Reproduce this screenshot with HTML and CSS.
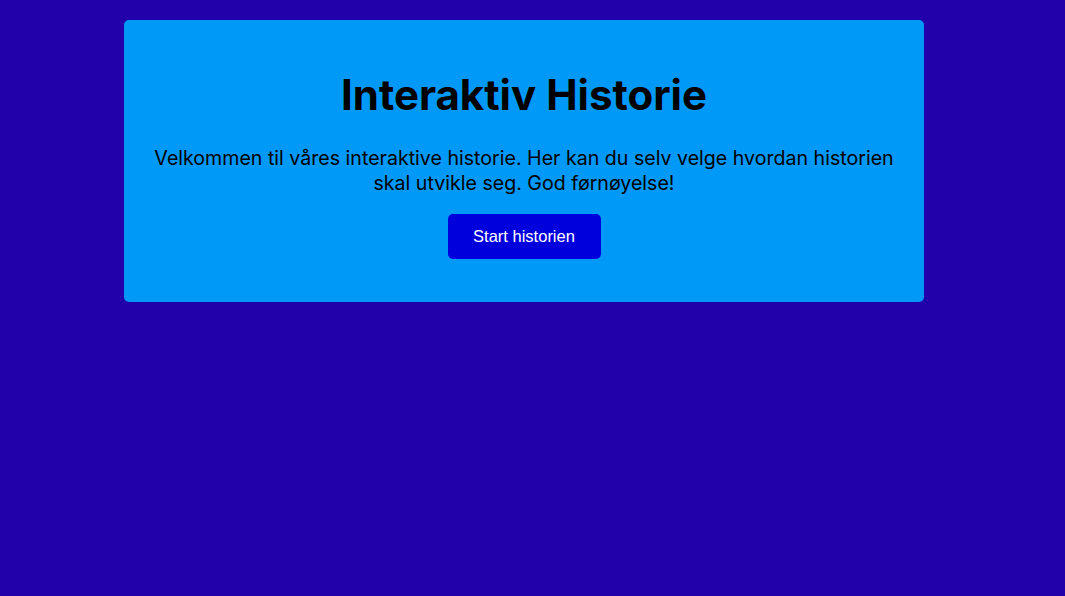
FILE: index.html
```html
<!DOCTYPE html>
<html lang="no">
<head>
<meta charset="utf-8">
<title>Interaktiv Historie</title>
<link rel="stylesheet" href="styles.css">
</head>
<body>
<main class="card">
  <h1 class="title">Interaktiv Historie</h1>
  <p class="intro">Velkommen til våres interaktive historie. Her kan du selv velge hvordan historien skal utvikle seg. God førnøyelse!</p>
  <button class="start" type="button">Start historien</button>
</main>
</body>
</html>
```
FILE: styles.css
```css
html, body {
  margin: 0;
  padding: 0;
}
body {
  background: #2200aa;
  font-family: "Inter", "Roboto", sans-serif;
  color: #000;
  padding: 20px 17px 0 0;
}
.card {
  width: 800px;
  box-sizing: border-box;
  margin: 0 auto;
  background: #0099f7;
  border-radius: 5px;
  padding: 51px 20px 43px;
  display: flex;
  flex-direction: column;
  align-items: center;
  text-align: center;
}
.title {
  margin: 0;
  font-size: 42px;
  line-height: 48px;
  font-weight: 700;
}
.intro {
  margin: 27px 0 0;
  font-size: 19.6px;
  line-height: 25px;
}
.start {
  margin-top: 18px;
  width: 153px;
  height: 45px;
  border: none;
  border-radius: 5px;
  background: #0000dd;
  color: #fff;
  font-family: "Liberation Sans", Arial, sans-serif;
  font-size: 16.5px;
  cursor: pointer;
}
```
